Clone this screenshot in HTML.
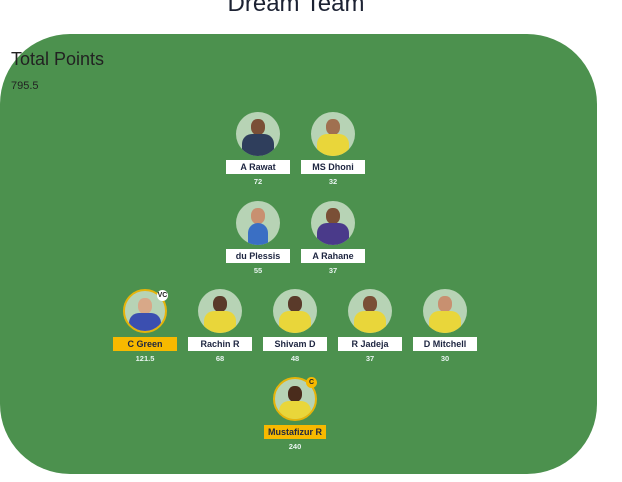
<!DOCTYPE html><html><head><style>
body{margin:0;width:622px;height:482px;background:#fff;font-family:"Liberation Sans",sans-serif;position:relative;overflow:hidden}
h1{position:absolute;left:0;width:592px;text-align:center;top:-10px;margin:0;font-size:24px;font-weight:normal;color:#1c2233}
.f{position:absolute;left:0;top:34px;width:597px;height:440px;background:#4c914e;border-radius:70px}
.tp{position:absolute;left:11px;top:49px;font-size:18px;color:#222}
.tv{position:absolute;left:11px;top:80px;font-size:11px;color:#222}
.p{position:absolute;width:70px;margin-left:-35px}
.c{width:44px;height:44px;border-radius:50%;background:#b7d3b5;margin:0 auto;position:relative;overflow:hidden;box-sizing:border-box}
.cap{border:2px solid #e6b40a}
.hd{position:absolute;left:15px;top:7px;width:14px;height:16px;border-radius:45%;background:#7a4f36}
.bd{position:absolute;left:6px;top:22px;width:32px;height:24px;border-radius:10px 10px 0 0;background:#e9d63a}
.n{width:64px;height:14px;background:#fff;margin:4px auto 0;font-size:9px;font-weight:bold;text-align:center;line-height:14px;color:#1d2540}
.g{background:#f7b900}
.s{text-align:center;font-size:7.5px;font-weight:bold;color:#e8f4f0;margin-top:3px}
.b{position:absolute;width:11px;height:11px;border-radius:50%;font-size:7px;text-align:center;line-height:11px;font-weight:bold;color:#222}
</style></head><body>
<h1>Dream Team</h1>
<div class="f"></div>
<div class="tp">Total Points</div><div class="tv">795.5</div>

<div class="p" style="left:258px;top:112px"><div class="c"><div class="hd"></div><div class="bd" style="background:#2f3e5c"></div></div><div class="n">A Rawat</div><div class="s">72</div></div>
<div class="p" style="left:333px;top:112px"><div class="c"><div class="hd" style="background:#a07050"></div><div class="bd"></div></div><div class="n">MS Dhoni</div><div class="s">32</div></div>

<div class="p" style="left:258px;top:201px"><div class="c"><div class="hd" style="background:#c89070"></div><div class="bd" style="background:#3a6fc4;left:12px;width:20px"></div></div><div class="n">du Plessis</div><div class="s">55</div></div>
<div class="p" style="left:333px;top:201px"><div class="c"><div class="hd"></div><div class="bd" style="background:#4a3a8a"></div></div><div class="n">A Rahane</div><div class="s">37</div></div>

<div class="p" style="left:145px;top:289px"><div class="c cap"><div class="hd" style="background:#d8a888;left:13px"></div><div class="bd" style="background:#3b4fb0;left:4px"></div></div><div class="n g">C Green</div><div class="s">121.5</div></div>
<div class="b" style="left:157px;top:290px;background:#fff">VC</div>
<div class="p" style="left:220px;top:289px"><div class="c"><div class="hd" style="background:#5a3a2a"></div><div class="bd"></div></div><div class="n">Rachin R</div><div class="s">68</div></div>
<div class="p" style="left:295px;top:289px"><div class="c"><div class="hd" style="background:#5a3a2a"></div><div class="bd"></div></div><div class="n">Shivam D</div><div class="s">48</div></div>
<div class="p" style="left:370px;top:289px"><div class="c"><div class="hd"></div><div class="bd"></div></div><div class="n">R Jadeja</div><div class="s">37</div></div>
<div class="p" style="left:445px;top:289px"><div class="c"><div class="hd" style="background:#c89070"></div><div class="bd"></div></div><div class="n">D Mitchell</div><div class="s">30</div></div>

<div class="p" style="left:295px;top:377px"><div class="c cap"><div class="hd" style="background:#4a2c1c;left:13px"></div><div class="bd" style="left:4px"></div></div><div class="n g" style="width:62px">Mustafizur R</div><div class="s">240</div></div>
<div class="b" style="left:306px;top:377px;background:#f7b900">C</div>
</body></html>
